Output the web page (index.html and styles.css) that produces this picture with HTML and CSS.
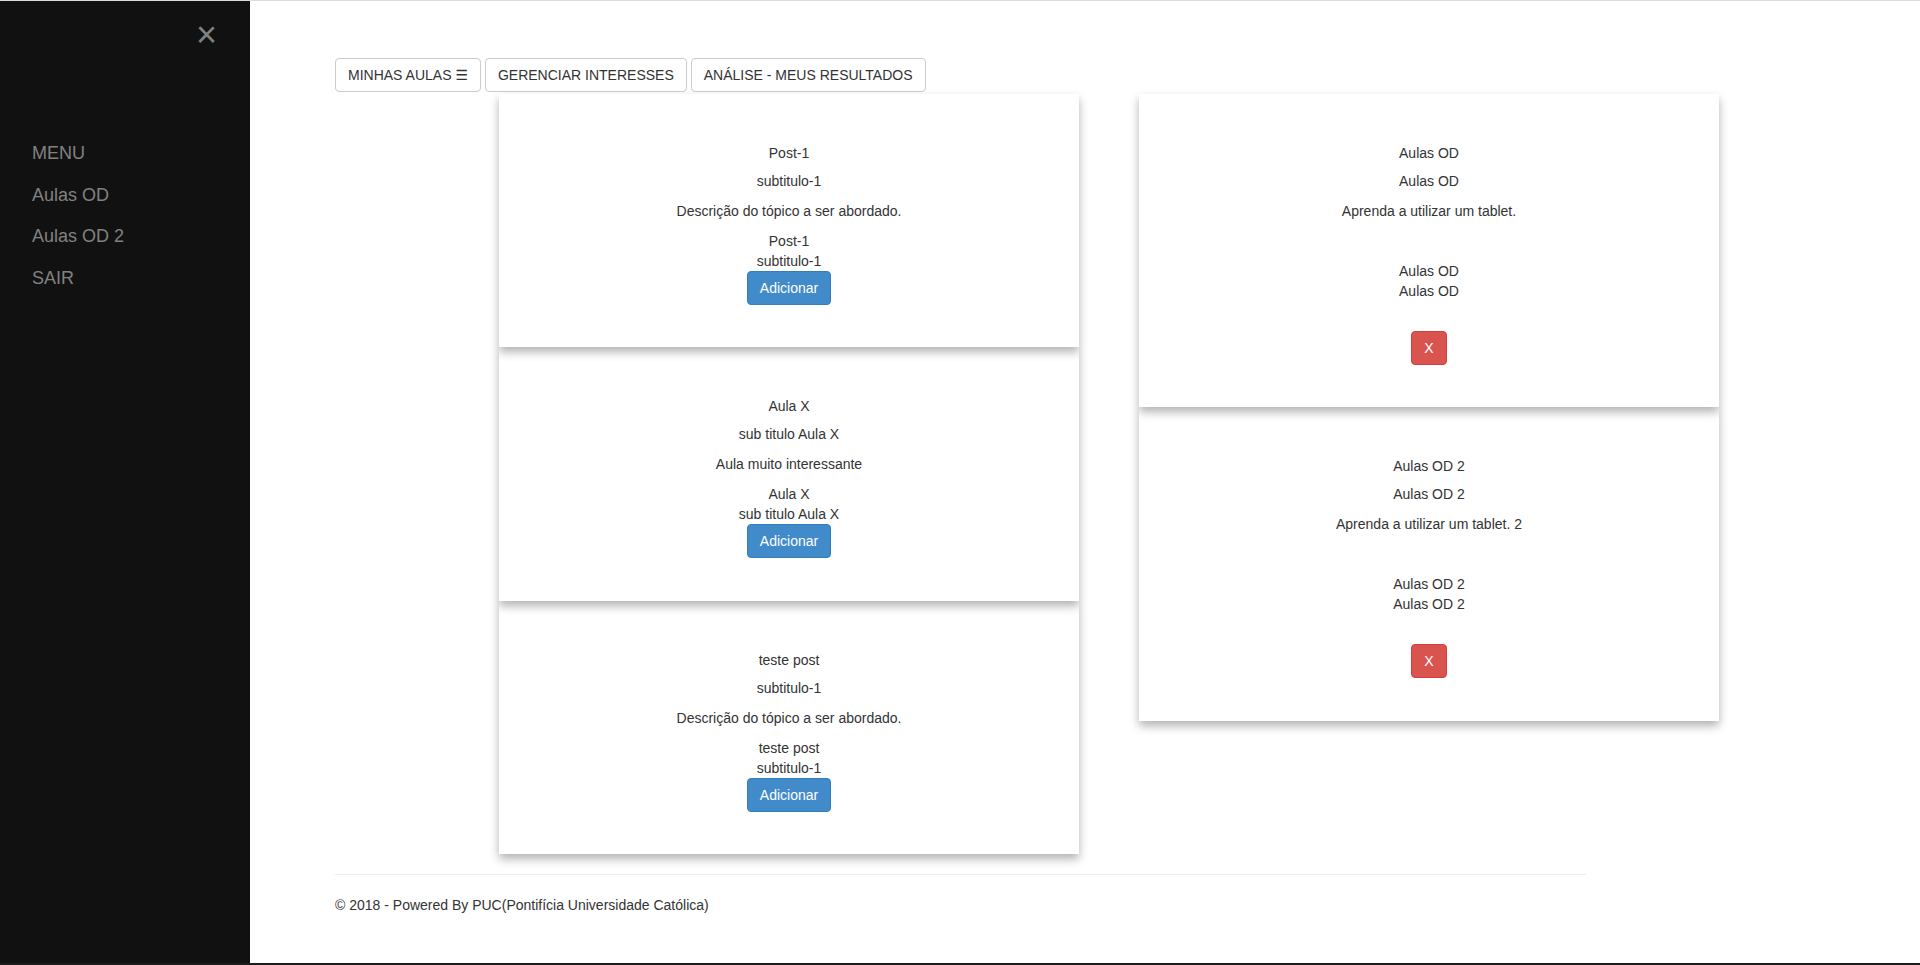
FILE: index.html
```html
<!DOCTYPE html>
<html lang="pt-BR">
<head>
<meta charset="utf-8">
<title>Minhas Aulas</title>
<link rel="stylesheet" href="styles.css">
</head>
<body>
<div class="frame">
  <aside class="sidenav">
    <a class="closebtn" href="#">&times;</a>
    <nav class="side-links">
      <a href="#">MENU</a>
      <a href="#">Aulas OD</a>
      <a href="#">Aulas OD 2</a>
      <a href="#">SAIR</a>
    </nav>
  </aside>
  <main class="main">
    <div class="topnav">
      <button class="btn btn-default">MINHAS AULAS <span class="burger">&#9776;</span></button>
      <button class="btn btn-default">GERENCIAR INTERESSES</button>
      <button class="btn btn-default">ANÁLISE - MEUS RESULTADOS</button>
    </div>
    <div class="cards">
      <div class="col">
        <div class="card">
          <p class="t1">Post-1</p>
          <p class="t2">subtitulo-1</p>
          <p class="desc">Descrição do tópico a ser abordado.</p>
          <div class="lines"><div>Post-1</div><div>subtitulo-1</div></div>
          <button class="btn btn-primary">Adicionar</button>
        </div>
        <div class="card">
          <p class="t1">Aula X</p>
          <p class="t2">sub titulo Aula X</p>
          <p class="desc">Aula muito interessante</p>
          <div class="lines"><div>Aula X</div><div>sub titulo Aula X</div></div>
          <button class="btn btn-primary">Adicionar</button>
        </div>
        <div class="card">
          <p class="t1">teste post</p>
          <p class="t2">subtitulo-1</p>
          <p class="desc">Descrição do tópico a ser abordado.</p>
          <div class="lines"><div>teste post</div><div>subtitulo-1</div></div>
          <button class="btn btn-primary">Adicionar</button>
        </div>
      </div>
      <div class="col">
        <div class="card card-mine">
          <p class="t1">Aulas OD</p>
          <p class="t2">Aulas OD</p>
          <p class="desc">Aprenda a utilizar um tablet.</p>
          <div class="lines"><div>Aulas OD</div><div>Aulas OD</div></div>
          <button class="btn btn-danger">X</button>
        </div>
        <div class="card card-mine">
          <p class="t1">Aulas OD 2</p>
          <p class="t2">Aulas OD 2</p>
          <p class="desc">Aprenda a utilizar um tablet. 2</p>
          <div class="lines"><div>Aulas OD 2</div><div>Aulas OD 2</div></div>
          <button class="btn btn-danger">X</button>
        </div>
      </div>
    </div>
    <footer class="footer">
      <hr>
      <p>&copy; 2018 - Powered By PUC(Pontifícia Universidade Católica)</p>
    </footer>
  </main>
</div>
</body>
</html>
```
FILE: styles.css
```css
html, body {
  margin: 0;
  padding: 0;
  background: #fff;
}
body {
  font-family: "Liberation Sans", Arial, Helvetica, sans-serif;
  font-size: 14px;
  line-height: 20px;
  color: #333;
  overflow: hidden;
}
.frame {
  height: 965px;
  box-sizing: border-box;
  border-top: 1px solid #dcdcdc;
  border-bottom: 2px solid #1c1c1c;
  display: flex;
}
.sidenav {
  width: 250px;
  flex-shrink: 0;
  background: #111;
}
.sidenav a {
  display: block;
  text-decoration: none;
  color: #818181;
}
.closebtn {
  text-align: right;
  padding: 8px 33px 8px 0;
  font-size: 36px;
  line-height: 51.43px;
}
.side-links {
  margin-top: 64.4px;
}
.side-links a {
  padding: 8px 8px 8px 32px;
  font-size: 18px;
  line-height: 25.71px;
}
.main {
  flex: 1;
  min-width: 0;
  padding: 56.5px 334px 0 85px;
}
.topnav {
  display: flex;
  gap: 4px;
}
.btn {
  display: inline-block;
  font-family: "Liberation Sans", Arial, Helvetica, sans-serif;
  font-size: 14px;
  line-height: 20px;
  padding: 6px 12px;
  border: 1px solid transparent;
  border-radius: 4px;
  margin: 0;
  cursor: pointer;
}
.btn-default {
  background: #fff;
  border-color: #ccc;
  color: #333;
}
.burger {
  font-family: "DejaVu Sans", sans-serif;
  font-size: 14px;
}
.btn-primary {
  background: #428bca;
  border-color: #357ebd;
  color: #fff;
}
.btn-danger {
  background: #d9534f;
  border-color: #d43f3a;
  color: #fff;
}
.cards {
  display: flex;
  align-items: flex-start;
  gap: 60px;
  margin-top: 2px;
  padding-left: 164px;
}
.col {
  width: 580px;
  flex-shrink: 0;
}
.card {
  position: relative;
  background: #fff;
  text-align: center;
  padding: 49px 16px 42.5px;
  box-shadow: 0 5px 9px 0 rgba(0, 0, 0, 0.3);
}
.card:nth-child(1) { z-index: 3; }
.card:nth-child(2) { z-index: 2; }
.card:nth-child(3) { z-index: 1; }
.card p {
  margin: 0;
}
.card .t1 {
  margin-bottom: 8px;
}
.card .t2 {
  margin-bottom: 10px;
}
.card .desc {
  margin-bottom: 10px;
}
.card-mine .desc {
  margin-bottom: 40px;
}
.card-mine .lines {
  margin-bottom: 30px;
}
.footer hr {
  border: 0;
  border-top: 1px solid #eee;
  margin: 20px 0;
}
.footer p {
  margin: 0;
}
```
